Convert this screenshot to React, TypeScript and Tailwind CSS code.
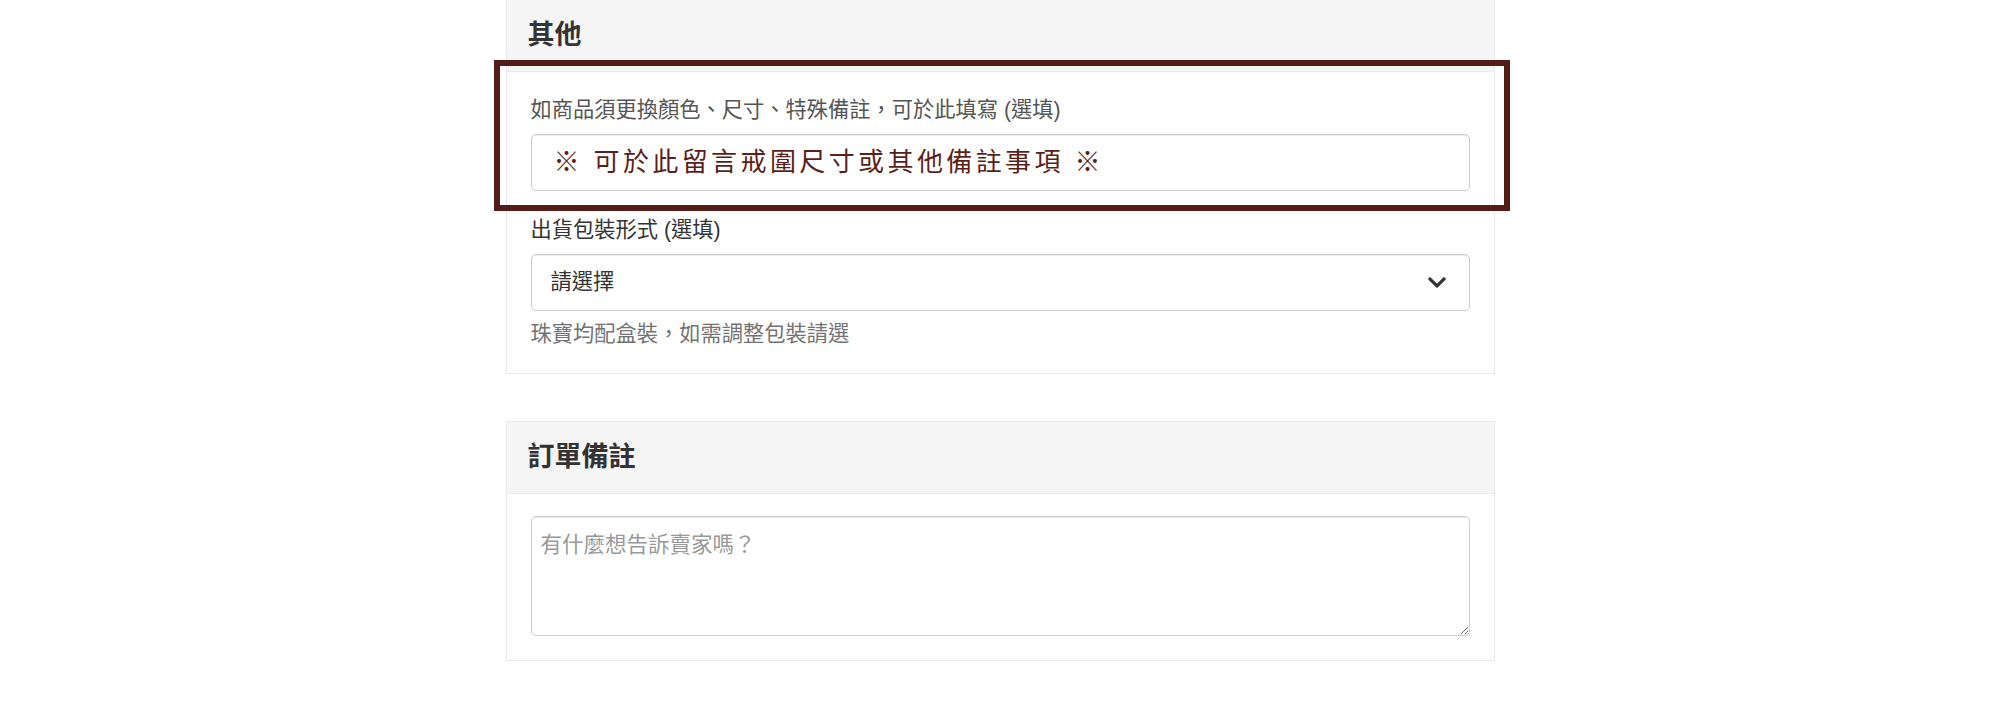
import { useState } from "react";

function ChevronDown() {
  return (
    <svg viewBox="5 120 438 272" className="h-[11px] w-[18px] fill-[#333]">
      <path d="M207 381.5L12.7 187.1c-9.4-9.4-9.4-24.6 0-33.9l22.7-22.7c9.4-9.4 24.5-9.4 33.9 0L224 284.5l154.7-154c9.4-9.3 24.5-9.3 33.9 0l22.7 22.7c9.4 9.4 9.4 24.6 0 33.9L241 381.5c-9.4 9.4-24.6 9.4-34 0z" />
    </svg>
  );
}

function PanelHeader({ title }: { title: string }) {
  return (
    <div className="flex h-[72px] items-center border-b border-[#ebebeb] bg-[#f5f5f5] px-[21px]">
      <h2 className="text-[27px] font-bold leading-none text-[#333]">{title}</h2>
    </div>
  );
}

export default function App() {
  const [note, setNote] = useState("");
  const [remark, setRemark] = useState("");

  return (
    <div className="min-h-[702px] bg-white font-['Liberation_Sans','Noto_Sans_CJK_TC',sans-serif]">
      <div className="mx-auto w-[989px]">
        {/* 其他 */}
        <section className="relative -mt-px border border-[#e8e8e8] bg-white">
          <PanelHeader title="其他" />
          <div className="px-[24px] pt-[24px] pb-[25px]">
            <label className="mb-[10px] block text-[21.25px] leading-[28px] text-[#555]">
              如商品須更換顏色、尺寸、特殊備註，可於此填寫 (選填)
            </label>
            <input
              value={note}
              onChange={(e) => setNote(e.target.value)}
              placeholder="※ 可於此留言戒圍尺寸或其他備註事項 ※"
              className="block h-[57px] w-full rounded-[5px] border border-[#ccc] px-[22px] text-[26px] tracking-[3.4px] text-[#5b1f1a] shadow-[inset_0_1px_1px_rgba(0,0,0,0.075)] outline-none placeholder:text-[#5b1f1a]"
            />

            <label className="mt-[25px] mb-[10px] block text-[21.25px] leading-[28px] text-[#333]">
              出貨包裝形式 (選填)
            </label>
            <div className="flex h-[57px] items-center justify-between rounded-[5px] border border-[#ccc] pr-[23px] pl-[19px] shadow-[inset_0_1px_1px_rgba(0,0,0,0.075)]">
              <span className="text-[21.25px] text-[#333]">請選擇</span>
              <ChevronDown />
            </div>
            <p className="mt-[9px] text-[21.25px] leading-[28px] text-[#737373]">
              珠寶均配盒裝，如需調整包裝請選
            </p>
          </div>

          {/* highlight frame */}
          <div className="pointer-events-none absolute top-[60px] left-[-13px] h-[151px] w-[1016px] border-[6px] border-[#521c18]" />
        </section>

        {/* 訂單備註 */}
        <section className="mt-[47px] border border-[#e8e8e8] bg-white">
          <PanelHeader title="訂單備註" />
          <div className="px-[24px] pt-[22px] pb-[24px]">
            <textarea
              value={remark}
              onChange={(e) => setRemark(e.target.value)}
              placeholder="有什麼想告訴賣家嗎？"
              className="block h-[120px] w-full rounded-[5px] border border-[#ccc] px-[9px] pt-[14px] text-[21.5px] leading-[28px] text-[#333] shadow-[inset_0_1px_1px_rgba(0,0,0,0.075)] outline-none placeholder:text-[#999]"
            />
          </div>
        </section>
      </div>
    </div>
  );
}
